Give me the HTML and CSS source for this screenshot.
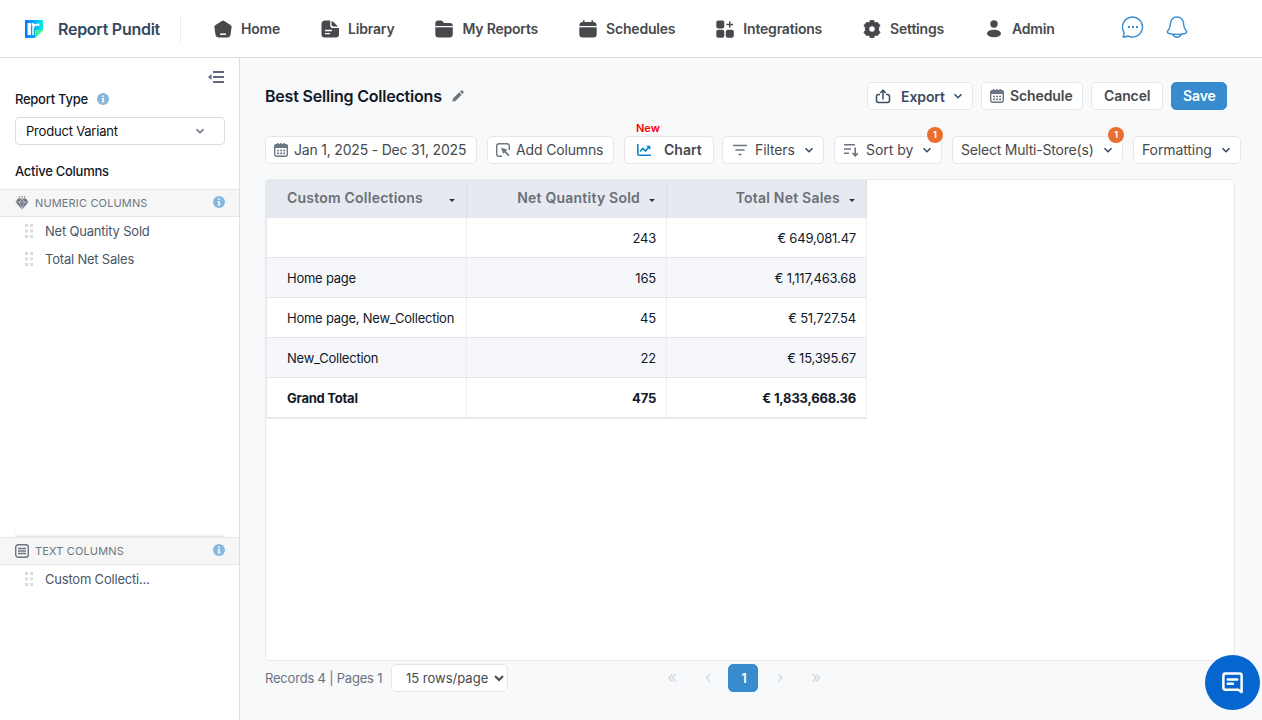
FILE: index.html
```html
<!DOCTYPE html>
<html lang="en">

<head>
    <meta charset="UTF-8">
    <meta name="viewport" content="width=device-width, initial-scale=1.0">
    <title>Report Pundit</title>
    <link rel="stylesheet" href="styles.css">
</head>

<body>
    <svg class="symbols" width="0" height="0">
        <symbol id="chevron" viewBox="0 0 10 10">
            <path d="M1.5 3.2L5 6.7L8.5 3.2" fill="none" stroke="currentColor" stroke-width="1.6" />
        </symbol>
        <symbol id="info" viewBox="0 0 12 12">
            <circle cx="6" cy="6" r="6" fill="#86b7de" />
            <path d="M5.2 2.5h1.6v1.4H5.2zM4.6 5h2.2v3.4h.7v1H4.6v-1h.7V6h-.7z" fill="#fff" />
        </symbol>
        <symbol id="calendar" viewBox="0 0 14 14">
            <rect x=".7" y="1.7" width="12.6" height="11.6" rx="2" fill="none" stroke="currentColor" stroke-width="1.4" />
            <path d="M.5 1.500h13V5H.5zM3 0h1.6v2H3zM6.2 0h1.6v2H6.2zM9.4 0H11v2H9.4z" fill="currentColor" />
            <path d="M3.200 7.5h8M3.200 10.3h8" stroke="currentColor" stroke-width="1.7" stroke-dasharray="1.900 1.100" />
        </symbol>
        <symbol id="grip" viewBox="0 0 8 14">
            <path d="M0 0h3v3H0zM5 0h3v3H5zM0 5.5h3v3H0zM5 5.5h3v3H5zM0 11h3v3H0zM5 11h3v3H5z" fill="#dcdcdc" />
        </symbol>
    </svg>

    <header class="header">
        <svg class="logo" viewBox="0 0 18 18">
            <defs>
                <linearGradient id="blue" x1="0" y1="0" x2="1" y2="0">
                    <stop offset="0" stop-color="#0878ff" />
                    <stop offset=".5" stop-color="#08a9ff" />
                    <stop offset="1" stop-color="#04f0d8" />
                </linearGradient>
            </defs>
            <path d="M0 0h18v10l-8 8H0z" fill="url(#blue)" />
            <path d="M10 10h8l-8 8z" fill="#3df58c" />
            <path d="M2.500 3h3.500v12H2.500z" fill="#f0faff" />
            <path d="M8.500 7.500Q8.500 4.800 11 4.800H14.500M7.700 3v3" fill="none" stroke="#fff" stroke-width="2" />
            <path d="M8 7v8" stroke="#fff" stroke-width="1.500" />
        </svg>
        <span class="brand">Report Pundit</span>
        <nav class="nav">
            <a class="nav-item">
                <svg viewBox="0 0 20 20"><path d="M8.800 2Q10 1.200 11.200 2L17.500 5.900Q18.800 6.700 18.600 8L17.500 16Q17 18.400 14.800 18.400H5.200Q3 18.400 2.500 16L1.400 8Q1.200 6.700 2.500 5.900z" fill="#47494d" /><path d="M7 15.200h6" stroke="#fff" stroke-width="1.500" /></svg>
                Home
            </a>
            <a class="nav-item">
                <svg viewBox="0 0 20 20"><path d="M5 1.500h5.200v4.700Q10.200 9 13 9h6v6.400q0 3-3 3H4.500q-3 0-3-3V5Q1.500 1.500 5 1.500z" fill="#47494d" /><path d="M11.500 2Q12.500 2 14 3.500L18 7.500H13.500Q11.500 7.500 11.500 5.500z" fill="#47494d" /><path d="M5 11.500h7M5 14.700h5" stroke="#fff" stroke-width="1.300" /></svg>
                Library
            </a>
            <a class="nav-item">
                <svg viewBox="0 0 20 20"><path d="M1.300 7V4.500Q1.300 1.500 4.500 1.500H7Q8 1.500 8.800 2.500L10 4H16Q18.800 4 18.800 7z" fill="#47494d" /><path d="M1.300 8.300h17.500V15q0 3.500-3.500 3.500H4.800q-3.500 0-3.500-3.500z" fill="#47494d" /></svg>
                My Reports
            </a>
            <a class="nav-item">
                <svg viewBox="0 0 20 20"><path d="M1.300 7Q1.300 3 4.500 3H15.500Q18.700 3 18.700 7zM5 1.200h1.500V4H5zM13.500 1.200H15V4h-1.500z" fill="#47494d" /><path d="M1.300 8.300h17.400V15q0 3.500-3.500 3.500H4.800q-3.500 0-3.500-3.500z" fill="#47494d" /></svg>
                Schedules
            </a>
            <a class="nav-item">
                <svg viewBox="0 0 20 20"><g fill="#47494d"><rect x="1.300" y="1.500" width="8" height="8" rx="2" /><rect x="1.300" y="10.800" width="8" height="8" rx="2" /><rect x="10.800" y="10.800" width="8" height="8" rx="2" /></g><path d="M14.800 2.200v6.600M11.500 5.500h6.600" stroke="#47494d" stroke-width="1.400" /></svg>
                Integrations
            </a>
            <a class="nav-item">
                <svg viewBox="0 0 20 20"><path d="M8.200 1.500h3.600l.8 2.600 2.700-.7 2.600 3L16.600 8.600v2.800l1.300 2.200-2.600 3-2.700-.7-.8 2.600H8.200l-.8-2.600-2.700.7-2.600-3 1.300-2.200V8.600L2.100 6.400l2.600-3 2.700.7z" fill="#47494d" stroke="#47494d" stroke-linejoin="round" /><circle cx="10" cy="10" r="2.700" fill="#fff" /></svg>
                Settings
            </a>
            <a class="nav-item">
                <svg viewBox="0 0 20 20"><circle cx="10" cy="5" r="3.700" fill="#47494d" /><ellipse cx="10" cy="14.500" rx="7" ry="3.800" fill="#47494d" /></svg>
                Admin
            </a>
        </nav>
        <div class="header-icons">
            <svg viewBox="0 0 22 22"><path d="M1 21Q2.500 19 1.800 16A10 10 0 1 1 6 20Q4 21 1 21z" fill="none" stroke="#3a8dce" stroke-width="1.400" stroke-linejoin="round" /><path d="M6 11h2M10 11h2M14 11h2" stroke="#3a8dce" stroke-width="1.800" /></svg>
            <svg viewBox="0 0 22 22"><path d="M1.500 15Q4 13 4.500 7Q5.500 1 11 1T17.500 7Q18 13 20.500 15Q21 17 19 17.500Q11 19.300 3 17.500Q1 17 1.500 15z" fill="none" stroke="#3a8dce" stroke-width="1.400" /><path d="M6.800 18.500Q8 21.200 11 21.200T15.200 18.500" fill="none" stroke="#3a8dce" stroke-width="1.500" /></svg>
        </div>
    </header>

    <div class="page">
        <aside class="sidebar">
            <svg class="collapse" viewBox="0 0 16 12"><path d="M5 1h11M5 6h11M5 11h11" stroke="#5f6b7c" stroke-width="1.800" /><path d="M0 6l3.500-3v6z" fill="#5f6b7c" /></svg>
            <div class="label">Report Type <svg class="info"><use href="#info" /></svg></div>
            <div class="type-select">Product Variant <svg class="chevron"><use href="#chevron" /></svg></div>
            <div class="label active-label">Active Columns</div>
            <div class="group-title">
                <svg class="group-icon" viewBox="0 0 14 14"><path d="M3 2.500h8L13.500 6L7 13.500L.5 6z" fill="#6c7682" /><path d="M1 6h12M4.500 6L7 13M9.500 6L7 13M4.500 6L7 2.500L9.500 6" fill="none" stroke="#f6f6f6" stroke-width=".5" /><path d="M4 .3h1.200v1.200H4zM6.500 0h1.200v1.200H6.500zM9 .3h1.200v1.200H9z" fill="#6c7682" /></svg>
                NUMERIC COLUMNS
                <svg class="info"><use href="#info" /></svg>
            </div>
            <ul class="columns numeric">
                <li><svg class="grip"><use href="#grip" /></svg>Net Quantity Sold</li>
                <li><svg class="grip"><use href="#grip" /></svg>Total Net Sales</li>
            </ul>
            <div class="group-title">
                <svg class="group-icon" viewBox="0 0 14 14"><rect x=".7" y=".7" width="12.600" height="12.600" rx="2.500" fill="none" stroke="#6c7682" stroke-width="1.400" /><path d="M3 4.500h8M3 7h8M3 9.500h8" stroke="#6c7682" stroke-width="1.600" /></svg>
                TEXT COLUMNS
                <svg class="info"><use href="#info" /></svg>
            </div>
            <ul class="columns text">
                <li><svg class="grip"><use href="#grip" /></svg>Custom Collecti...</li>
            </ul>
        </aside>

        <main class="main">
            <div class="title-row">
                <h1>Best Selling Collections</h1>
                <svg class="pencil" viewBox="0 0 12 12"><path d="M.3 11.700L1 8.500L7.200 2.300L9.700 4.800L3.500 11zM8 1.600L9.200.4Q9.800 0 10.400.6L11.400 1.600Q12 2.200 11.600 2.800L10.400 4z" fill="#6c7682" /></svg>
                <div class="actions">
                    <div class="btn export">
                        <svg class="icon16" viewBox="0 0 16 16"><path d="M5 6.500H3.500Q1.500 6.500 1.500 8.500V12.500Q1.500 14.500 3.500 14.500H12.500Q14.500 14.500 14.500 12.500V8.500Q14.500 6.500 12.500 6.500H11M8 11.500V3M5.200 5L8 2.200L10.800 5" fill="none" stroke="#3a4b63" stroke-width="1.500" /></svg>
                        Export
                        <svg class="chevron"><use href="#chevron" /></svg>
                    </div>
                    <div class="btn schedule"><svg class="icon14"><use href="#calendar" /></svg>Schedule</div>
                    <div class="btn cancel">Cancel</div>
                    <div class="btn save">Save</div>
                </div>
            </div>

            <div class="toolbar">
                <div class="btn date"><svg class="icon14"><use href="#calendar" /></svg>Jan 1, 2025 - Dec 31, 2025</div>
                <div class="btn add">
                    <svg class="icon14" viewBox="0 0 14 14"><path d="M6 13.300H3Q.7 13.300.7 11V3Q.7.7 3 .7H11Q13.300.7 13.300 3V7" fill="none" stroke="currentColor" stroke-width="1.400" /><path d="M5 4.500L11.500 6.800L9.800 8.200L13.500 12L12.300 13.300L8.500 9.500L7.200 11z" fill="currentColor" /></svg>
                    Add Columns
                </div>
                <div class="btn chart">
                    <span class="new">New</span>
                    <svg class="icon14" viewBox="0 0 14 14"><path d="M.8 1V11Q.8 12.300 2.100 12.300H14" fill="none" stroke="#0b84d0" stroke-width="1.600" /><path d="M3 8.500L6 5.500L8.500 8L12 4" fill="none" stroke="#0b84d0" stroke-width="1.700" /><path d="M9 2.800h4.300V7z" fill="#0b84d0" /></svg>
                    Chart
                </div>
                <div class="btn filters">
                    <svg class="icon14" viewBox="0 0 14 14"><path d="M0 2.500h14M2.500 7h9M5.500 11.500h3" stroke="currentColor" stroke-width="1.600" /></svg>
                    Filters
                    <svg class="chevron"><use href="#chevron" /></svg>
                </div>
                <div class="btn sort">
                    <svg class="icon14" viewBox="0 0 14 14"><path d="M0 1.800h11M0 6h7M0 10.200h5M11.200 4.500V12M8.500 10L11.200 12.800L14 10" fill="none" stroke="currentColor" stroke-width="1.600" /></svg>
                    Sort by
                    <svg class="chevron"><use href="#chevron" /></svg>
                    <span class="badge">1</span>
                </div>
                <div class="btn stores">
                    Select Multi-Store(s)
                    <svg class="chevron"><use href="#chevron" /></svg>
                    <span class="badge">1</span>
                </div>
                <div class="btn formatting">
                    Formatting
                    <svg class="chevron"><use href="#chevron" /></svg>
                </div>
            </div>

            <div class="panel">
                <table>
                    <thead>
                        <tr>
                            <th><div>Custom Collections <i class="caret"></i></div></th>
                            <th><div>Net Quantity Sold <i class="caret"></i></div></th>
                            <th><div>Total Net Sales <i class="caret"></i></div></th>
                        </tr>
                    </thead>
                    <tbody>
                        <tr><td></td><td>243</td><td>€ 649,081.47</td></tr>
                        <tr><td>Home page</td><td>165</td><td>€ 1,117,463.68</td></tr>
                        <tr><td>Home page, New_Collection</td><td>45</td><td>€ 51,727.54</td></tr>
                        <tr><td>New_Collection</td><td>22</td><td>€ 15,395.67</td></tr>
                        <tr class="total"><td>Grand Total</td><td>475</td><td>€ 1,833,668.36</td></tr>
                    </tbody>
                </table>
            </div>

            <div class="footer">
                <span class="records">Records 4 | Pages 1</span>
                <select>
                    <option>15 rows/page</option>
                </select>
                <div class="pager">
                    <span class="disabled">«</span>
                    <span class="disabled prev">‹</span>
                    <span class="current">1</span>
                    <span class="disabled prev">›</span>
                    <span class="disabled">»</span>
                </div>
            </div>
        </main>
    </div>

    <div class="chat">
        <svg viewBox="0 0 24 24"><path d="M4.500 2.500H19.500Q21.500 2.500 21.500 4.500V22L18 19.500H4.500Q2.500 19.500 2.500 17.500V4.500Q2.500 2.500 4.500 2.500z" fill="none" stroke="#fff" stroke-width="2.600" stroke-linejoin="round" /><path d="M7 8.800h10M7 13.300h5.500" stroke="#fff" stroke-width="2.500" stroke-linecap="round" /></svg>
    </div>
</body>

</html>
```
FILE: styles.css
```css
* {
    box-sizing: border-box;
}

body {
    margin: 0;
    height: 720px;
    overflow: hidden;
    font-family: Inter, "Liberation Sans", sans-serif;
    font-size: 14px;
    letter-spacing: -.2px;
    color: #47494d;
    background: #f8f9fb;
}

svg {
    display: block;
    flex: none;
}

.symbols {
    position: absolute;
}

/* header */
.header {
    display: flex;
    align-items: center;
    height: 58px;
    padding-left: 25px;
    background: #fff;
    border-bottom: 1px solid #dcdcdc;
}

.logo {
    width: 18px;
    height: 18px;
}

.brand {
    width: 123px;
    height: 26px;
    margin-left: 15px;
    line-height: 26px;
    font-size: 16px;
    font-weight: 600;
    letter-spacing: -.27px;
    color: #34495e;
    border-right: 1px solid #ececec;
    white-space: nowrap;
}

.nav {
    display: flex;
    gap: 40px;
    margin-left: 32px;
}

.nav-item {
    display: flex;
    align-items: center;
    gap: 8px;
    font-size: 14px;
    font-weight: 600;
    letter-spacing: -.2px;
    white-space: nowrap;
}

.nav-item svg {
    width: 20px;
    height: 20px;
}

.header-icons {
    display: flex;
    gap: 22px;
    margin: -4px 74px 0 auto;
}

.header-icons svg {
    width: 22px;
    height: 22px;
}

.page {
    display: flex;
    height: 662px;
}

/* sidebar */
.sidebar {
    display: flex;
    flex-direction: column;
    width: 240px;
    background: #fff;
    border-right: 1px solid #dcdfe4;
}

.collapse {
    width: 16px;
    height: 12px;
    margin: 13px 15px 0 0;
    align-self: flex-end;
}

.label {
    display: flex;
    align-items: center;
    gap: 9px;
    height: 18px;
    margin: 7px 15px 0;
    font-size: 13px;
    font-weight: 500;
    letter-spacing: -.27px;
    color: #111827;
}

.info {
    width: 12px;
    height: 12px;
}

.type-select {
    display: flex;
    align-items: center;
    justify-content: space-between;
    height: 28px;
    margin: 9px 14px 0 15px;
    padding: 0 19px 0 10px;
    font-size: 13px;
    color: #111;
    border: 1px solid #d9dce1;
    border-radius: 4px;
}

.type-select .chevron {
    color: #5f6b7c;
}

.active-label {
    margin: 17px 15px 9px;
}

.group-title {
    display: flex;
    align-items: center;
    gap: 6px;
    height: 28px;
    padding: 0 14px 0 15px;
    font-size: 11px;
    letter-spacing: .15px;
    color: #6c7682;
    background: #f6f6f6;
    border-top: 1px solid #e6e6e6;
    border-bottom: 1px solid #e6e6e6;
}

.group-title .info {
    margin: -2px 0 0 auto;
}

.group-icon {
    width: 14px;
    height: 14px;
}

.columns {
    margin: 0 14px;
    padding: 0;
    list-style: none;
    border-left: 1px solid #fcfcfc;
    border-right: 1px solid #fcfcfc;
}

.numeric {
    height: 320px;
    box-shadow: inset 0 -4px 4px -4px #ccc;
}

.text {
    flex: 1;
}

.columns li {
    display: flex;
    align-items: center;
    gap: 12px;
    height: 28px;
    padding-left: 10px;
    font-size: 13px;
    color: #4a5666;
}

.grip {
    width: 8px;
    height: 14px;
}

/* main area */
.main {
    flex: 1;
    padding: 24px 20px 0 25px;
}

.title-row {
    display: flex;
    align-items: center;
    height: 28px;
}

h1 {
    margin: 0;
    font-size: 16px;
    font-weight: 600;
    color: #111827;
}

.pencil {
    width: 12px;
    height: 12px;
    margin-left: 10px;
}

.actions {
    display: flex;
    gap: 8px;
    margin: 0 15px 0 auto;
}

.btn {
    position: relative;
    display: flex;
    align-items: center;
    height: 28px;
    padding: 0 0 1px 8px;
    font-size: 14px;
    color: #47494d;
    background: #fff;
    border: 1px solid #e5e7eb;
    border-radius: 5px;
    white-space: nowrap;
}

.btn .chevron {
    margin: 0 9px 0 auto;
    color: #3a4b63;
}

.chevron {
    width: 10px;
    height: 10px;
}

.icon14 {
    width: 14px;
    height: 14px;
    margin-right: 6px;
    color: #6c7682;
}

.icon16 {
    width: 16px;
    height: 16px;
    margin-right: 10px;
}

.actions .btn {
    font-weight: 600;
    letter-spacing: -.1px;
}

.actions .export {
    width: 106px;
    padding: 0 0 0 7px;
    color: #3a4b63;
}

.schedule {
    width: 102px;
}

.cancel {
    width: 72px;
    padding-left: 12px;
}

.actions .save {
    width: 56px;
    padding-left: 11px;
    color: #fff;
    background: #388bcc;
    border-color: #388bcc;
}

.toolbar {
    display: flex;
    gap: 10px;
    margin-top: 26px;
}

.date {
    width: 212px;
}

.add {
    width: 127px;
    letter-spacing: -.15px;
}

.chart {
    width: 90px;
    margin-right: -2px;
    padding-left: 12px;
    font-weight: 600;
    letter-spacing: 0;
}

.chart .icon14 {
    margin-right: 13px;
}

.filters {
    width: 102px;
    padding-left: 10px;
    letter-spacing: -.1px;
}

.filters .icon14,
.sort .icon14 {
    margin-right: 8px;
}

.sort {
    width: 108px;
    padding-left: 9px;
    letter-spacing: -.05px;
}

.stores {
    width: 171px;
}

.formatting {
    width: 108px;
    letter-spacing: -.1px;
}

.new {
    position: absolute;
    top: -16px;
    left: 11px;
    font-size: 11px;
    font-weight: 600;
    color: #f00;
}

.badge {
    position: absolute;
    top: -10px;
    right: -2px;
    width: 16px;
    height: 16px;
    line-height: 16px;
    font-size: 9px;
    font-weight: 700;
    text-align: center;
    color: #fff;
    background: #e86f2c;
    border-radius: 50%;
}

/* report table */
.panel {
    width: 970px;
    height: 482px;
    margin-top: 15px;
    background: #fff;
    border: 1px solid #e8eaed;
    border-radius: 4px;
}

table {
    width: 601px;
    table-layout: fixed;
    border-collapse: separate;
    border-spacing: 0;
    border-left: 1px solid #e8eaed;
    border-bottom: 1px solid #eee;
}

th {
    height: 38px;
    padding: 0 11px 3px 20px;
    font-size: 14px;
    font-weight: 600;
    letter-spacing: .22px;
    color: #6b6f76;
    background: #e6e9f0;
    border-right: 1px solid #dddfe4;
    white-space: nowrap;
}

th div {
    display: flex;
    align-items: center;
    justify-content: flex-end;
    gap: 9px;
}

th:first-child div {
    justify-content: space-between;
}

.caret {
    margin-top: 6px;
    border: 3px solid transparent;
    border-top-color: #333;
    border-bottom: 0;
}

td {
    height: 40px;
    padding: 1px 10px 0 20px;
    font-size: 13px;
    color: #111827;
    text-align: right;
    border-right: 1px solid #eee;
    border-bottom: 1px solid #e5e5e5;
    white-space: nowrap;
}

td:first-child {
    text-align: left;
    letter-spacing: -.24px;
}

tbody tr:nth-child(even) {
    background: #f6f7fb;
}

.total td {
    font-weight: 700;
}

/* footer */
.footer {
    display: flex;
    align-items: center;
    margin-top: 3px;
}

.records {
    width: 126px;
    font-size: 13px;
    color: #6b7280;
    white-space: nowrap;
}

select {
    width: 117px;
    height: 28px;
    padding-left: 10px;
    font-family: inherit;
    font-size: 13px;
    color: #47494d;
    background: #fff;
    border: 1px solid #e5e7eb;
    border-radius: 5px;
}

.pager {
    display: flex;
    gap: 6px;
    margin-left: 148px;
}

.pager span {
    width: 30px;
    height: 28px;
    padding-left: 2px;
    line-height: 26px;
    text-align: center;
    border: 1px solid #f4f5f7;
    border-radius: 5px;
}

.pager .disabled {
    font-size: 17px;
    line-height: 24px;
    color: #d5d7da;
}

.pager .prev {
    color: #cbdfef;
}

.pager .current {
    font-weight: 600;
    font-size: 13px;
    color: #fff;
    background: #388bcc;
    border-color: #388bcc;
}

.chat {
    position: fixed;
    right: 2px;
    bottom: 10px;
    display: flex;
    align-items: center;
    justify-content: center;
    width: 55px;
    height: 55px;
    background: #0566cf;
    border-radius: 50%;
}

.chat svg {
    width: 23px;
    height: 23px;
}
```
